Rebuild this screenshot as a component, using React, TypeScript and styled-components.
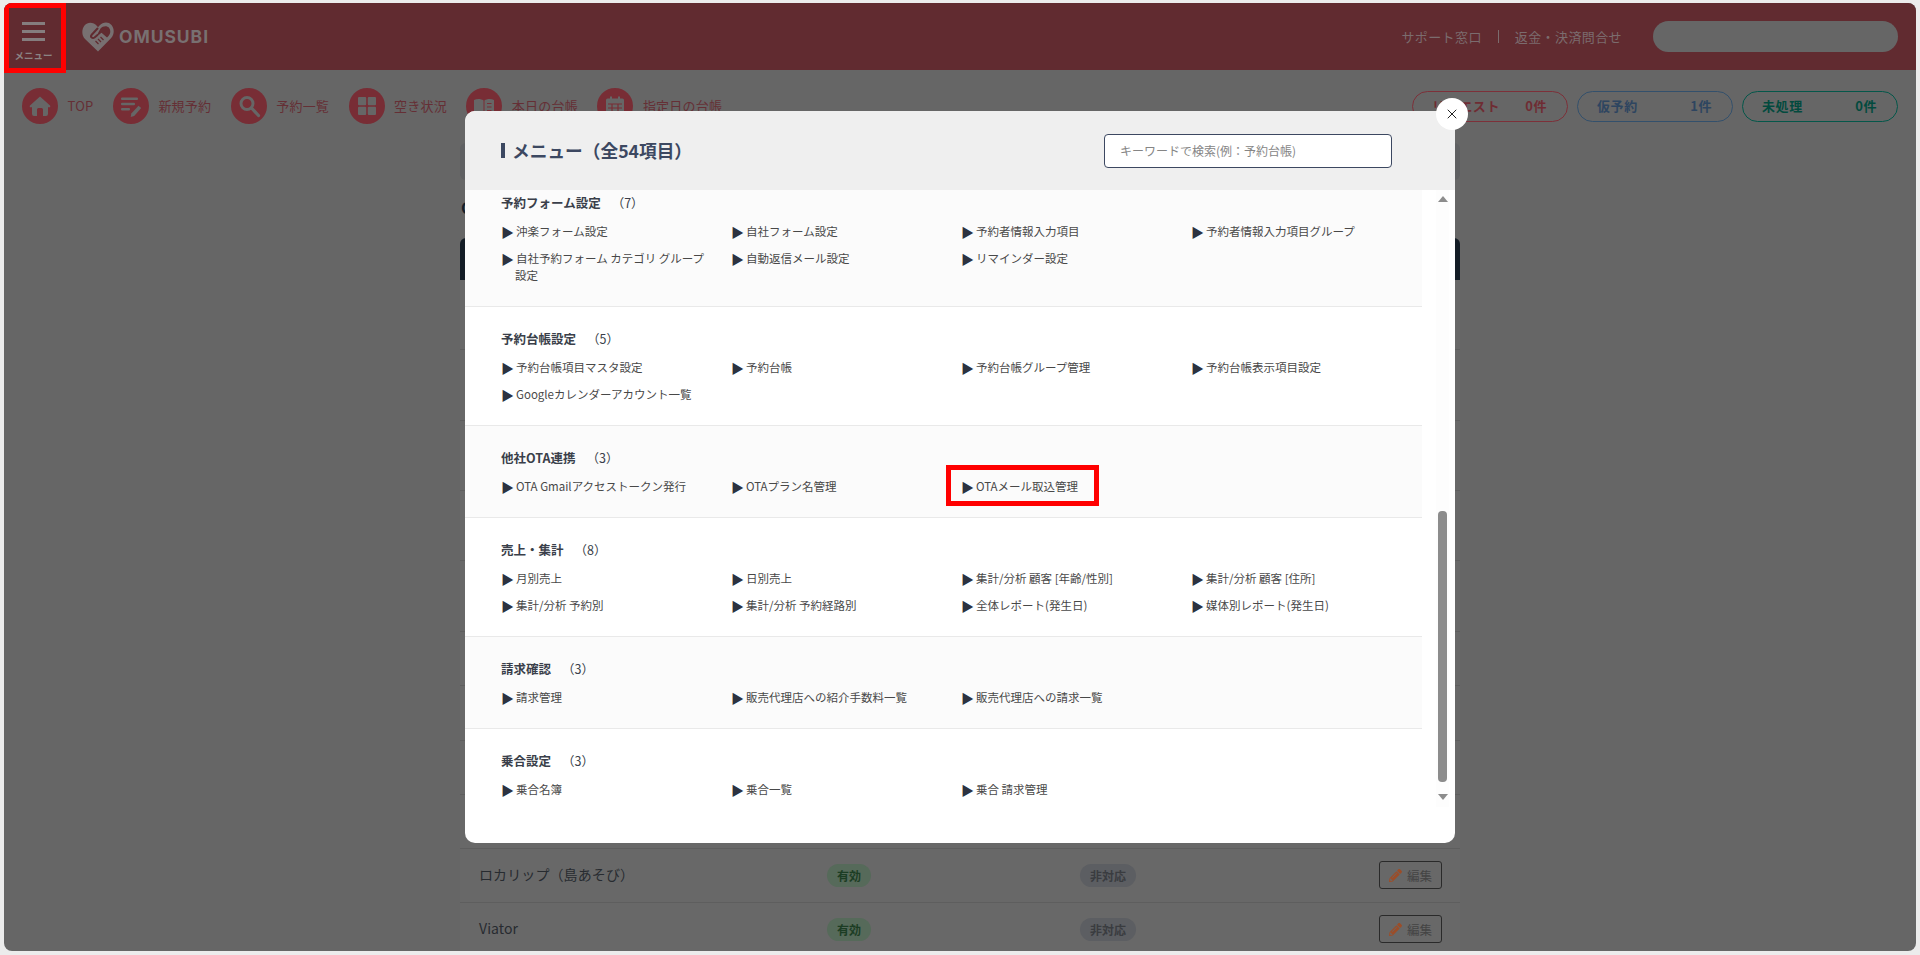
import React from "react";
import styled, {createGlobalStyle} from "styled-components";
import {FaPencilAlt} from "react-icons/fa";
import {X} from "lucide-react";

const GlobalStyle = createGlobalStyle`
    html, body {
        margin: 0;
        height: 100%;
        background: #ececec;
        overflow: hidden;
        font-family: "Noto Sans CJK JP", "Noto Sans", sans-serif;
    }
    #root {
        padding: 3px 4px 0;
    }
`

const Shell = styled.div`
    position: relative;
    height: 948px;
    background: #666;
    border-radius: 8px;
    overflow: hidden;
`
const Header = styled.header`
    display: flex;
    align-items: center;
    height: 67px;
    background: #612b30;
    padding-right: 18px;
`
const MenuButton = styled.div`
    position: relative;
    align-self: flex-start;
    box-sizing: border-box;
    width: 62px;
    height: 67px;
    padding: 19px 3px 0 0;
    display: flex;
    flex-direction: column;
    align-items: center;
    gap: 5px;
    &::after {
        content: '';
        position: absolute;
        top: 0;
        left: 0;
        width: 62px;
        height: 70px;
        box-sizing: border-box;
        border: 5px solid #ff0000;
    }
`
const MenuLine = styled.span`
    width: 23px;
    height: 3px;
    background: #857d7e;
`
const MenuLabel = styled.span`
    margin-top: 1px;
    font-size: 9.5px;
    line-height: 16px;
    font-weight: 700;
    color: #8b8384;
`
const Logo = styled.div`
    display: flex;
    align-items: center;
    gap: 5px;
    margin-left: 16px;
    font-family: "Inter", "Liberation Sans", sans-serif;
    font-size: 17.5px;
    font-weight: 700;
    letter-spacing: .95px;
    color: #787071;
`
const HeaderLinks = styled.div`
    display: flex;
    align-items: center;
    margin-left: auto;
    font-size: 13px;
    letter-spacing: .4px;
    color: #7b6c6e;
`
const LinkDivider = styled.span`
    width: 1px;
    height: 13px;
    margin: 0 16px;
    background: #7b6c6e;
`
const UserPill = styled.div`
    width: 245px;
    height: 31px;
    margin-left: 31px;
    border-radius: 16px;
    background: #666;
`

const NavBar = styled.nav`
    display: flex;
    align-items: center;
    height: 36px;
    padding: 18px 18px 0 18px;
`
const NavItem = styled.div`
    display: flex;
    align-items: center;
    gap: 9.5px;
    margin-right: 19.5px;
    font-size: 13px;
    letter-spacing: .2px;
    color: #652f35;
`
const NavCircle = styled.span`
    display: flex;
    align-items: center;
    justify-content: center;
    width: 36px;
    height: 36px;
    border-radius: 50%;
    background: #782d35;
`
const NavLabel = styled.span`
    padding-bottom: 2px;
`
const StatusGroup = styled.div`
    display: flex;
    gap: 9px;
    margin-left: auto;
`
const StatusPill = styled.div<{ $color: string; $text: string; }>`
    box-sizing: border-box;
    display: flex;
    align-items: center;
    justify-content: space-between;
    width: 156px;
    height: 31px;
    padding: 0 20px 2px 19px;
    border: 1px solid ${props => props.$color};
    border-radius: 16px;
    font-size: 13px;
    font-weight: 700;
    letter-spacing: .6px;
    color: ${props => props.$text};
`

const Content = styled.main`
    width: 1000px;
    margin: 19px auto 0;
`
const SearchPanel = styled.div`
    height: 37px;
    border-radius: 6px;
    background: #5f6062;
`
const PageHeading = styled.h2`
    margin: 16px 0 0 1px;
    height: 22px;
    font-size: 16px;
    line-height: 22px;
    font-weight: 700;
    color: #15202b;
`
const TableHead = styled.div`
    height: 42px;
    margin-top: 20px;
    border-radius: 6px 6px 0 0;
    background: #131c25;
`
const Row = styled.div<{ $height: number; }>`
    box-sizing: border-box;
    display: grid;
    grid-template-columns: 348px 253px 1fr auto;
    align-items: center;
    height: ${props => props.$height}px;
    padding: 0 18px 0 19px;
    background: #686868;
    border-bottom: 1px solid #5e5e5e;
`
const RowName = styled.span`
    padding-bottom: 3px;
    font-size: 14px;
    letter-spacing: .1px;
    color: #272b30;
`
const Badge = styled.span<{ $on?: boolean; }>`
    justify-self: start;
    padding: 0 10px;
    height: 23px;
    border-radius: 12px;
    font-size: 12px;
    line-height: 23px;
    font-weight: 700;
    background: ${props => props.$on ? '#566a5a' : '#5c5e62'};
    color: ${props => props.$on ? '#1c3d24' : '#3a3c40'};
`
const EditButton = styled.span`
    box-sizing: border-box;
    display: flex;
    align-items: center;
    justify-content: center;
    gap: 5px;
    width: 63px;
    height: 28px;
    margin-bottom: 1px;
    border: 1px solid #2a2a2a;
    border-radius: 3px;
    font-size: 12.5px;
    color: #444;
    svg {
        color: #9c4d28;
    }
`

const Modal = styled.div`
    position: absolute;
    top: 108px;
    left: 461px;
    display: flex;
    flex-direction: column;
    width: 990px;
    height: 732px;
    border-radius: 10px;
    background: #fff;
`
const CloseButton = styled.div`
    position: absolute;
    top: -13px;
    right: -13px;
    display: flex;
    align-items: center;
    justify-content: center;
    width: 32px;
    height: 32px;
    border-radius: 50%;
    background: #fff;
    color: #222;
`
const ModalHeader = styled.div`
    flex: none;
    display: flex;
    align-items: center;
    justify-content: space-between;
    height: 79px;
    padding: 0 63px 0 36px;
    border-radius: 10px 10px 0 0;
    background: #efefef;
`
const ModalTitle = styled.h1`
    display: flex;
    align-items: center;
    gap: 7px;
    margin: 0;
    font-size: 17.7px;
    font-weight: 700;
    color: #3c4861;
    span {
        padding-bottom: 2px;
    }
    &::before {
        content: '';
        width: 4px;
        height: 15px;
        background: #3c4861;
    }
`
const SearchInput = styled.input`
    box-sizing: border-box;
    width: 288px;
    height: 34px;
    padding: 0 15px;
    border: 1px solid #3c4861;
    border-radius: 4px;
    background: #fff;
    font-family: inherit;
    font-size: 12px;
    &::placeholder {
        color: #858585;
    }
`
const ModalBody = styled.div`
    flex: 1;
    display: flex;
    min-height: 0;
    overflow: hidden;
    border-radius: 0 0 10px 10px;
`
const SectionList = styled.div`
    flex: none;
    width: 957px;
    margin-top: -19px;
`
const Section = styled.section<{ $shaded?: boolean; $last?: boolean; }>`
    padding: 22px 0 22px 36px;
    background: ${props => props.$shaded ? '#fbfbfb' : '#fff'};
    border-bottom: ${props => props.$last ? 'none' : '1px solid #e9e9e9'};
`
const SectionTitle = styled.h3`
    margin: 0 0 11px;
    font-size: 12.5px;
    line-height: 19px;
    font-weight: 700;
    color: #3a3f4a;
`
const SectionCount = styled.span`
    margin-left: 11px;
    font-weight: 400;
`
const ItemGrid = styled.ul`
    display: grid;
    grid-template-columns: repeat(4, 230px);
    row-gap: 10px;
    margin: 0;
    padding: 0;
    list-style: none;
`
const Item = styled.li`
    padding: 0 20px 0 14px;
    font-size: 11.5px;
    line-height: 17px;
    color: #484848;
    text-indent: -14px;
    &::before {
        content: '▶';
        display: inline-block;
        width: 15px;
        text-indent: 0;
        font-size: 13px;
        line-height: 17px;
        vertical-align: top;
        color: #2c3240;
    }
`
const ItemMarked = styled.span`
    position: relative;
    &::after {
        content: '';
        position: absolute;
        top: -13px;
        left: -30px;
        width: 153px;
        height: 41px;
        box-sizing: border-box;
        border: 5px solid #ff0000;
    }
`
const ScrollTrack = styled.div`
    flex: none;
    display: flex;
    flex-direction: column;
    align-items: center;
    width: 13px;
    height: 617px;
    margin-left: 14px;
    background: #fdfdfd;
`
const ScrollArrow = styled.span<{ $down?: boolean; }>`
    flex: none;
    width: 0;
    height: 0;
    margin-top: ${props => props.$down ? '12px' : '6px'};
    border-left: 5px solid transparent;
    border-right: 5px solid transparent;
    ${props => props.$down ? 'border-top: 6px solid #8c8c8c;' : 'border-bottom: 6px solid #8c8c8c;'}
`
const ScrollThumb = styled.span`
    flex: none;
    width: 9px;
    height: 271px;
    margin-top: 309px;
    border-radius: 4px;
    background: #8c8c8c;
`

const menu = [
    {
        title: '予約フォーム設定', count: 7,
        items: ['沖楽フォーム設定', '自社フォーム設定', '予約者情報入力項目', '予約者情報入力項目グループ', '自社予約フォーム カテゴリ グループ設定', '自動返信メール設定', 'リマインダー設定'],
    },
    {
        title: '予約台帳設定', count: 5,
        items: ['予約台帳項目マスタ設定', '予約台帳', '予約台帳グループ管理', '予約台帳表示項目設定', 'Googleカレンダーアカウント一覧'],
    },
    {
        title: '他社OTA連携', count: 3,
        items: ['OTA Gmailアクセストークン発行', 'OTAプラン名管理', 'OTAメール取込管理'],
    },
    {
        title: '売上・集計', count: 8,
        items: ['月別売上', '日別売上', '集計/分析 顧客 [年齢/性別]', '集計/分析 顧客 [住所]', '集計/分析 予約別', '集計/分析 予約経路別', '全体レポート(発生日)', '媒体別レポート(発生日)'],
    },
    {
        title: '請求確認', count: 3,
        items: ['請求管理', '販売代理店への紹介手数料一覧', '販売代理店への請求一覧'],
    },
    {
        title: '乗合設定', count: 3,
        items: ['乗合名簿', '乗合一覧', '乗合 請求管理'],
    },
];

const hiddenRows = [70, 71, 70, 70, 71, 54, 55, 54, 54];

const iconColor = '#666';
const circleColor = '#782d35';

const HomeIcon = () => <svg width="24" height="24" viewBox="0 0 24 24">
    <path fill={iconColor} d="M12 2.500 22 11.600a1 1 0 0 1-.7 1.700H20V20a2 2 0 0 1-2 2h-3v-6.500a1.500 1.500 0 0 0-1.500-1.500h-3A1.500 1.500 0 0 0 9 15.500V22H6a2 2 0 0 1-2-2v-6.700H2.700a1 1 0 0 1-.7-1.700z"/>
</svg>

const NewIcon = () => <svg width="24" height="24" viewBox="0 0 24 24">
    <g fill={iconColor}>
        <rect x="2" y="3.500" width="17" height="2.600" rx="1"/>
        <rect x="2" y="8.700" width="14" height="2.600" rx="1"/>
        <rect x="2" y="13.900" width="9" height="2.600" rx="1"/>
        <path d="M19.500 11.800l2.700 2.200-7 8-3.500 1 .6-3.400z"/>
    </g>
</svg>

const SearchIcon = () => <svg width="24" height="24" viewBox="0 0 24 24" fill="none" stroke={iconColor}>
    <circle cx="10" cy="9.500" r="6" strokeWidth="3"/>
    <path d="M14.500 14l7 7.500" strokeWidth="3.200" strokeLinecap="round"/>
</svg>

const GridIcon = () => <svg width="20" height="20" viewBox="0 0 20 20" fill={iconColor}>
    <rect x="1" y="1" width="8.200" height="8.200" rx="1"/>
    <rect x="10.800" y="1" width="8.200" height="8.200" rx="1"/>
    <rect x="1" y="10.800" width="8.200" height="8.200" rx="1"/>
    <rect x="10.800" y="10.800" width="8.200" height="8.200" rx="1"/>
</svg>

const BookIcon = () => <svg width="24" height="24" viewBox="0 0 24 24">
    <path fill={iconColor} d="M2 6c3-1.500 7-1.500 9.500.5V21c-2.500-1.500-6.500-1.500-9.500-.5zM22 6c-3-1.500-7-1.500-9.500.5V21c2.500-1.500 6.500-1.500 9.500-.5z"/>
    <path fill="none" stroke={circleColor} strokeWidth="1.200" d="M15 9.500h4.500M15 13h4.500M15 16.500h4.500"/>
</svg>

const CalendarIcon = () => <svg width="22" height="24" viewBox="0 0 22 24">
    <path fill={iconColor} d="M2 6a1.500 1.500 0 0 1 1.500-1.500H6V2.500h2v2h6v-2h2v2h2.500A1.500 1.500 0 0 1 20 6v15a1.500 1.500 0 0 1-1.500 1.500h-15A1.500 1.500 0 0 1 2 21z"/>
    <path fill="none" stroke={circleColor} strokeWidth="1.200" d="M4 10h14M4 14h14M4 18h14M8 10v11M14 10v11"/>
</svg>

const LogoMark = () => <svg width="32" height="30" viewBox="0 0 32 30">
    <path fill="#787071" d="M16 29.500 3 17C-.5 13.500-.5 7 2.500 3.500 6 -.5 11.500 .2 15 4l1 1.200L17.500 3.500C21-.3 26.500-.5 29.500 3c3 3.500 3 9.500-.3 13z"/>
    <path fill="#612b30" d="M18.500 6.500C21 3.800 25 3.500 27 5.800c2 2.400 1.700 6-.5 8.300l-1.500 1.500-5.500-4.800-2.500 2-2 .2z"/>
    <path fill="none" stroke="#612b30" strokeWidth="2" strokeLinecap="round" d="M15.500 6.500 9.500 13c-1.500 2 1 4 3 2.500l3-2.500"/>
    <path fill="none" stroke="#612b30" strokeWidth="1.300" d="M13.500 19l3 3M16 17l3 3M18.500 15l3 3"/>
</svg>

const RowEdit = () => <EditButton><FaPencilAlt size={13}/>編集</EditButton>

const App = () => {
    return <>
        <GlobalStyle/>
        <Shell>
            <Header>
                <MenuButton>
                    <MenuLine/>
                    <MenuLine/>
                    <MenuLine/>
                    <MenuLabel>メニュー</MenuLabel>
                </MenuButton>
                <Logo><LogoMark/>OMUSUBI</Logo>
                <HeaderLinks>
                    <span>サポート窓口</span>
                    <LinkDivider/>
                    <span>返金・決済問合せ</span>
                </HeaderLinks>
                <UserPill/>
            </Header>

            <NavBar>
                <NavItem><NavCircle><HomeIcon/></NavCircle><NavLabel>TOP</NavLabel></NavItem>
                <NavItem><NavCircle><NewIcon/></NavCircle><NavLabel>新規予約</NavLabel></NavItem>
                <NavItem><NavCircle><SearchIcon/></NavCircle><NavLabel>予約一覧</NavLabel></NavItem>
                <NavItem><NavCircle><GridIcon/></NavCircle><NavLabel>空き状況</NavLabel></NavItem>
                <NavItem><NavCircle><BookIcon/></NavCircle><NavLabel>本日の台帳</NavLabel></NavItem>
                <NavItem><NavCircle><CalendarIcon/></NavCircle><NavLabel>指定日の台帳</NavLabel></NavItem>
                <StatusGroup>
                    <StatusPill $color="#7d3039" $text="#6f2c33"><span>リクエスト</span><span>0件</span></StatusPill>
                    <StatusPill $color="#33506c" $text="#2e4560"><span>仮予約</span><span>1件</span></StatusPill>
                    <StatusPill $color="#04574a" $text="#034a3e"><span>未処理</span><span>0件</span></StatusPill>
                </StatusGroup>
            </NavBar>

            <Content>
                <SearchPanel/>
                <PageHeading>OTA</PageHeading>
                <TableHead/>
                {hiddenRows.map((height, i) => <Row key={i} $height={height}/>)}
                <Row $height={54}>
                    <RowName>ロカリップ（島あそび）</RowName>
                    <Badge $on>有効</Badge>
                    <Badge>非対応</Badge>
                    <RowEdit/>
                </Row>
                <Row $height={54}>
                    <RowName>Viator</RowName>
                    <Badge $on>有効</Badge>
                    <Badge>非対応</Badge>
                    <RowEdit/>
                </Row>
            </Content>

            <Modal>
                <CloseButton><X size={16} strokeWidth={1.5}/></CloseButton>
                <ModalHeader>
                    <ModalTitle><span>メニュー（全54項目）</span></ModalTitle>
                    <SearchInput placeholder="キーワードで検索(例：予約台帳)"/>
                </ModalHeader>
                <ModalBody>
                    <SectionList>
                        {menu.map((section, i) => <Section key={section.title} $shaded={i % 2 == 0} $last={i == menu.length - 1}>
                            <SectionTitle>{section.title}<SectionCount>（{section.count}）</SectionCount></SectionTitle>
                            <ItemGrid>
                                {section.items.map(item => <Item key={item}>
                                    {item == 'OTAメール取込管理' ? <ItemMarked>{item}</ItemMarked> : item}
                                </Item>)}
                            </ItemGrid>
                        </Section>)}
                    </SectionList>
                    <ScrollTrack>
                        <ScrollArrow/>
                        <ScrollThumb/>
                        <ScrollArrow $down/>
                    </ScrollTrack>
                </ModalBody>
            </Modal>
        </Shell>
    </>
};

export default App;
